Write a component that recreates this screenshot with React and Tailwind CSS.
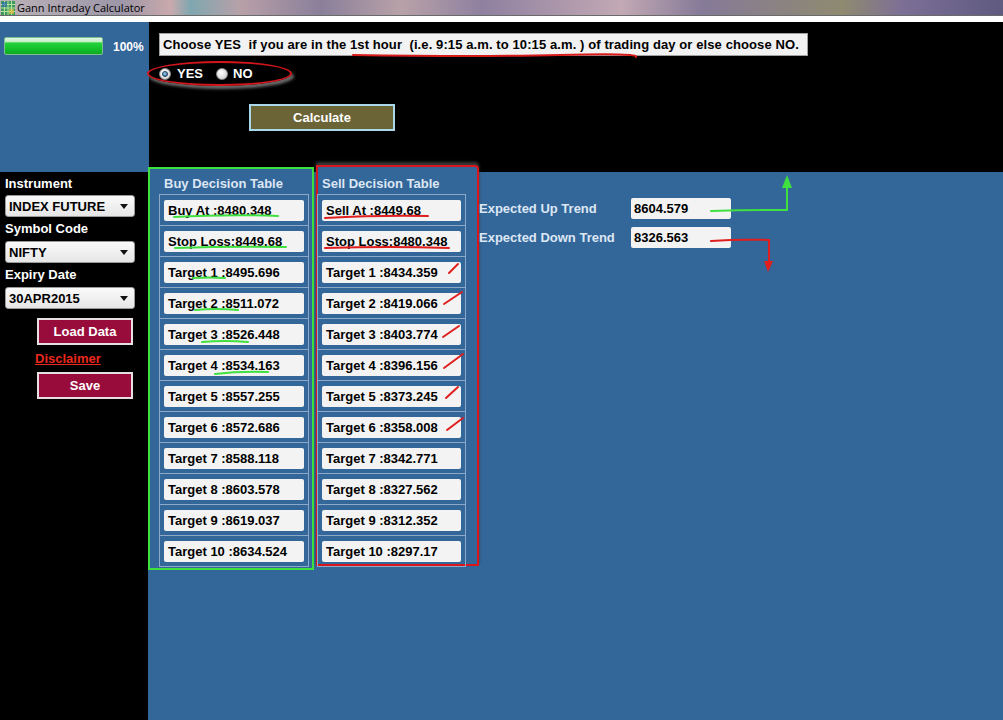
import React from "react";

const buyRows = [
  "Buy At :8480.348",
  "Stop Loss:8449.68",
  "Target 1 :8495.696",
  "Target 2 :8511.072",
  "Target 3 :8526.448",
  "Target 4 :8534.163",
  "Target 5 :8557.255",
  "Target 6 :8572.686",
  "Target 7 :8588.118",
  "Target 8 :8603.578",
  "Target 9 :8619.037",
  "Target 10 :8634.524",
];

const sellRows = [
  "Sell At :8449.68",
  "Stop Loss:8480.348",
  "Target 1 :8434.359",
  "Target 2 :8419.066",
  "Target 3 :8403.774",
  "Target 4 :8396.156",
  "Target 5 :8373.245",
  "Target 6 :8358.008",
  "Target 7 :8342.771",
  "Target 8 :8327.562",
  "Target 9 :8312.352",
  "Target 10 :8297.17",
];

const AppIcon = () => (
  <svg width="14" height="14" viewBox="0 0 14 14" className="shrink-0">
    <rect x="0" y="0" width="14" height="14" fill="#3c9a5a" />
    <path d="M0 3.5H14M0 7H14M0 10.5H14M3.5 0V14M7 0V14M10.5 0V14" stroke="#b8e0a0" strokeWidth="1" />
    <rect x="1" y="1" width="5" height="5" fill="#2f6fb0" opacity="0.7" />
    <rect x="8" y="8" width="5" height="5" fill="#e0c040" opacity="0.7" />
  </svg>
);

const SelectBox = ({ value }) => (
  <div className="w-[130px] h-[22px] ml-[5px] rounded-[3px] border border-[#9a9a9a] bg-[linear-gradient(#fafafa,#e6e6e6)] flex items-center justify-between pl-[3px] pr-[6px]">
    <span className="text-[13px] font-bold text-black leading-none">{value}</span>
    <svg width="8" height="5" viewBox="0 0 8 5">
      <path d="M0 0H8L4 5Z" fill="#111" />
    </svg>
  </div>
);

const Radio = ({ checked }) => (
  <span className="w-[12px] h-[12px] rounded-full border border-[#8a8a8a] bg-[radial-gradient(circle_at_40%_35%,#ffffff,#c8c8c8)] flex items-center justify-center">
    {checked && <span className="w-[6px] h-[6px] rounded-full bg-[radial-gradient(circle_at_40%_35%,#9fd3f0,#1f5f8f)] border border-[#1d3f5f]" />}
  </span>
);

const DecisionGrid = ({ rows, width }) => (
  <div className={`border-t border-l border-[#8ea8c8] ${width}`}>
    {rows.map((r, i) => (
      <div key={i} className="h-[31px] border-b border-r border-[#8ea8c8] flex items-center px-[4px]">
        <div className="w-full h-[21px] bg-[#f3f3f3] rounded-[2px] flex items-center pl-[4px] text-[13px] font-bold text-black leading-none">
          {r}
        </div>
      </div>
    ))}
  </div>
);

const Annotations = () => (
  <svg className="absolute inset-0 pointer-events-none" width="1003" height="720" viewBox="0 0 1003 720" fill="none" strokeLinecap="round">
    {/* instruction underline */}
    <path d="M353 55 Q480 57 560 55 T636 57" stroke="#d81c1c" strokeWidth="2" />
    {/* green underlines */}
    <g stroke="#3fe03f" strokeWidth="2">
      <path d="M174 217 Q230 214 278 216" />
      <path d="M175 248 Q230 246 286 247" />
      <path d="M193 278 Q210 277 225 278" />
      <path d="M195 310 Q215 308 238 310" />
      <path d="M202 342 Q225 340 248 342" />
      <path d="M215 374 Q240 371 268 372" />
    </g>
    {/* red underlines and ticks */}
    <g stroke="#e01e1e" strokeWidth="2">
      <path d="M325 218 Q380 215 428 216" />
      <path d="M325 248 Q390 246 449 248" />
      <path d="M449 273 L458 264" />
      <path d="M444 304 L462 292" />
      <path d="M443 337 L459 326" />
      <path d="M444 368 L463 354" />
      <path d="M446 398 L458 387" />
      <path d="M447 430 L463 418" />
    </g>
    {/* trend arrows */}
    <path d="M711 211 Q750 210 787 210 L787 186" stroke="#3fe03f" strokeWidth="2" />
    <path d="M782 188 L787 175 L792 188 Z" fill="#3fe03f" />
    <path d="M711 241 Q740 239 769 240 L769 262" stroke="#e01e1e" strokeWidth="2" />
    <path d="M764 261 L768 272 L773 261 Z" fill="#e01e1e" />
  </svg>
);

export default function App() {
  return (
    <div className="relative w-[1003px] h-[720px] overflow-hidden bg-black font-['Liberation_Sans',Arial,sans-serif]">
      {/* title bar */}
      <div className="h-[15px] flex items-center gap-[2px] pl-[1px] bg-[linear-gradient(90deg,#bcb3b8_0%,#9c96a8_12%,#c9a9ac_17%,#7fa7b0_19%,#b8a0a8_24%,#8a7f9a_32%,#b8a2a8_40%,#8f80a0_48%,#c2a9b4_62%,#857a98_70%,#8f8a70_84%,#7c6f96_90%,#5f5a80_100%)]">
        <AppIcon />
        <span className="text-[11px] leading-none text-black font-['Open_Sans',sans-serif]">Gann Intraday Calculator</span>
      </div>
      <div className="h-[7px] bg-white border-t border-[#6a6a6a]" />

      {/* top section */}
      <div className="flex h-[150px]">
        <div className="w-[149px] bg-[#336699] pl-[4px] pt-[13px]">
          <div className="flex items-center">
            <div className="w-[99px] h-[18px] rounded-[2px] border border-[#7fbf8f] bg-[linear-gradient(#e0f5e0_0%,#c6eec6_25%,#23d23c_30%,#12c02a_70%,#0ea825_100%)]" />
            <span className="ml-[10px] mt-[3px] text-[12px] font-bold text-white">100%</span>
          </div>
        </div>
        <div className="flex-1 bg-black pt-[11px]">
          <div className="ml-[10px] w-[649px] h-[23px] bg-[#f2f2f2] border border-[#a0a0a0] flex items-center pl-[3px]">
            <span className="text-[13px] font-bold text-black whitespace-pre leading-none tracking-[0.1px]">
              {"Choose YES  if you are in the 1st hour  (i.e. 9:15 a.m. to 10:15 a.m. ) of trading day or else choose NO."}
            </span>
          </div>
          <div className="-ml-[2px] mt-[5px] w-[145px] h-[25px] rounded-[50%] border-2 border-[#d4161c] shadow-[2px_3px_3px_#6a6a6a] flex items-center pl-[10px]">
            <Radio checked />
            <span className="ml-[6px] text-[13px] font-bold text-white leading-none">YES</span>
            <span className="ml-[13px]"><Radio /></span>
            <span className="ml-[5px] text-[13px] font-bold text-white leading-none">NO</span>
          </div>
          <button className="ml-[100px] mt-[18px] w-[146px] h-[27px] bg-[#6b6436] border-2 border-[#a8d8ea] text-[13px] font-bold text-white flex items-center justify-center">
            Calculate
          </button>
        </div>
      </div>

      {/* bottom section */}
      <div className="flex h-[548px]">
        <div className="w-[148px] bg-black flex flex-col">
          <div className="h-[23px] pl-[5px] flex items-center text-[13px] font-bold text-white">Instrument</div>
          <SelectBox value="INDEX FUTURE" />
          <div className="h-[24px] pl-[5px] flex items-center text-[13px] font-bold text-white">Symbol Code</div>
          <SelectBox value="NIFTY" />
          <div className="h-[24px] pl-[5px] flex items-center text-[13px] font-bold text-white">Expiry Date</div>
          <SelectBox value="30APR2015" />
          <button className="ml-[37px] mt-[9px] w-[96px] h-[27px] bg-[#980c3c] border-2 border-[#e6e0e0] text-[13px] font-bold text-white flex items-center justify-center">
            Load Data
          </button>
          <div className="ml-[35px] mt-[7px] h-[14px] text-[13px] font-bold text-[#e8281c] underline leading-none">Disclaimer</div>
          <button className="ml-[37px] mt-[6px] w-[96px] h-[27px] bg-[#980c3c] border-2 border-[#e6e0e0] text-[13px] font-bold text-white flex items-center justify-center">
            Save
          </button>
        </div>

        <div className="flex-1 bg-[#336699] flex items-start">
          {/* buy table */}
          <div className="-mt-[5px] w-[166px] border-2 border-[#3ee03e] bg-[#336699] pb-[1px]">
            <div className="h-[25px] pl-[14px] pt-[8px] text-[13px] font-bold text-[#dde7f4] leading-none">Buy Decision Table</div>
            <div className="ml-[9px]">
              <DecisionGrid rows={buyRows} width="w-[150px]" />
            </div>
          </div>

          {/* sell table */}
          <div className="-mt-[7px] ml-[2px] w-[163px] h-[401px] border-2 border-[#d8161c] rounded-tr-[4px] bg-[#336699] shadow-[0_-3px_3px_#3a3a3a]">
            <div className="h-[27px] pl-[4px] pt-[10px] text-[13px] font-bold text-[#dde7f4] leading-none">Sell Decision Table</div>
            <div className="-ml-[1px]">
              <DecisionGrid rows={sellRows} width="w-[149px]" />
            </div>
          </div>

          {/* trends */}
          <div className="mt-[26px] flex flex-col gap-[8px]">
            <div className="flex items-center">
              <span className="w-[152px] text-[13px] font-bold text-[#dde7f4]">Expected Up Trend</span>
              <div className="w-[100px] h-[21px] bg-[#f3f3f3] rounded-[2px] flex items-center pl-[3px] text-[13px] font-bold text-black">8604.579</div>
            </div>
            <div className="flex items-center">
              <span className="w-[152px] text-[13px] font-bold text-[#dde7f4]">Expected Down Trend</span>
              <div className="w-[100px] h-[21px] bg-[#f3f3f3] rounded-[2px] flex items-center pl-[3px] text-[13px] font-bold text-black">8326.563</div>
            </div>
          </div>
        </div>
      </div>

      <Annotations />
    </div>
  );
}
